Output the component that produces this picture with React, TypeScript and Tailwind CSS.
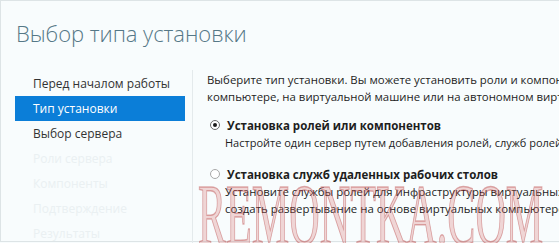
import React from "react";

const steps = [
  { label: "Перед началом работы", state: "done" },
  { label: "Тип установки", state: "active" },
  { label: "Выбор сервера", state: "done" },
  { label: "Роли сервера", state: "off" },
  { label: "Компоненты", state: "off" },
  { label: "Подтверждение", state: "off" },
  { label: "Результаты", state: "off" },
];

const Radio = ({ checked }: { checked?: boolean }) => (
  <span
    className={
      "flex h-[10px] w-[10px] shrink-0 items-center justify-center rounded-full border bg-white " +
      (checked ? "border-[#6b6b6b]" : "border-[#a8a8a8]")
    }
  >
    {checked && <span className="h-[4px] w-[4px] rounded-full bg-[#1a1a1a]" />}
  </span>
);

export default function App() {
  return (
    <div className="relative h-[243px] w-[559px] overflow-hidden bg-[#f8fcfd] font-['Open_Sans',sans-serif] text-[11.4px] text-[#1e1e1e]">
      <div className="h-[242px] border border-r-0 border-[#dde4e6]">
        <h1 className="pl-[15px] pt-[16px] text-[22px] font-light leading-[32px] tracking-[-0.05px] text-[#557887]">
          Выбор типа установки
        </h1>

        <div className="mt-[21px] flex">
          <nav className="h-[200px] w-[192px] shrink-0 border-r border-[#e4eaec] pt-[1px]">
            <ul className="ml-[14px] w-[170px] text-[12px]">
              {steps.map((s) => (
                <li
                  key={s.label}
                  className={
                    "h-[25px] whitespace-nowrap pl-[18px] leading-[25px] " +
                    (s.state === "active"
                      ? "bg-[#0b7ed8] text-white"
                      : s.state === "done"
                      ? "text-[#333333]"
                      : "text-[#eaf0f2]")
                  }
                >
                  {s.label}
                </li>
              ))}
            </ul>
          </nav>

          <div className="whitespace-nowrap pl-[14px] pt-[1px] leading-[17px]">
            <p>Выберите тип установки. Вы можете установить роли и компоненты на работающем физическом</p>
            <p>компьютере, на виртуальной машине или на автономном виртуальном жестком диске.</p>

            <div className="mt-[11px]">
              <div className="flex h-[18px] items-center gap-[7px] pl-[3px]">
                <Radio checked />
                <span className="text-[11.5px] font-bold">Установка ролей или компонентов</span>
              </div>
              <p className="pl-[18px] text-[11px]">Настройте один сервер путем добавления ролей, служб ролей и компонентов.</p>
            </div>

            <div className="mt-[14px]">
              <div className="flex h-[18px] items-center gap-[7px] pl-[3px]">
                <Radio />
                <span className="text-[11.5px] font-bold">Установка служб удаленных рабочих столов</span>
              </div>
              <p className="pl-[18px]">
                Установите службы ролей для инфраструктуры виртуальных рабочих столов (VDI), чтобы
              </p>
              <p className="pl-[18px]">
                создать развертывание на основе виртуальных компьютеров или на основе сеансов.
              </p>
            </div>
          </div>
        </div>
      </div>

      <div className="pointer-events-none absolute left-[198px] top-[172px] origin-left scale-x-[0.49] whitespace-nowrap font-['Liberation_Serif',serif] text-[86px] leading-none text-[rgba(215,110,110,0.28)] [-webkit-text-stroke:1.5px_rgba(175,45,45,0.38)]">
        REMONTKA.COM
      </div>
    </div>
  );
}
